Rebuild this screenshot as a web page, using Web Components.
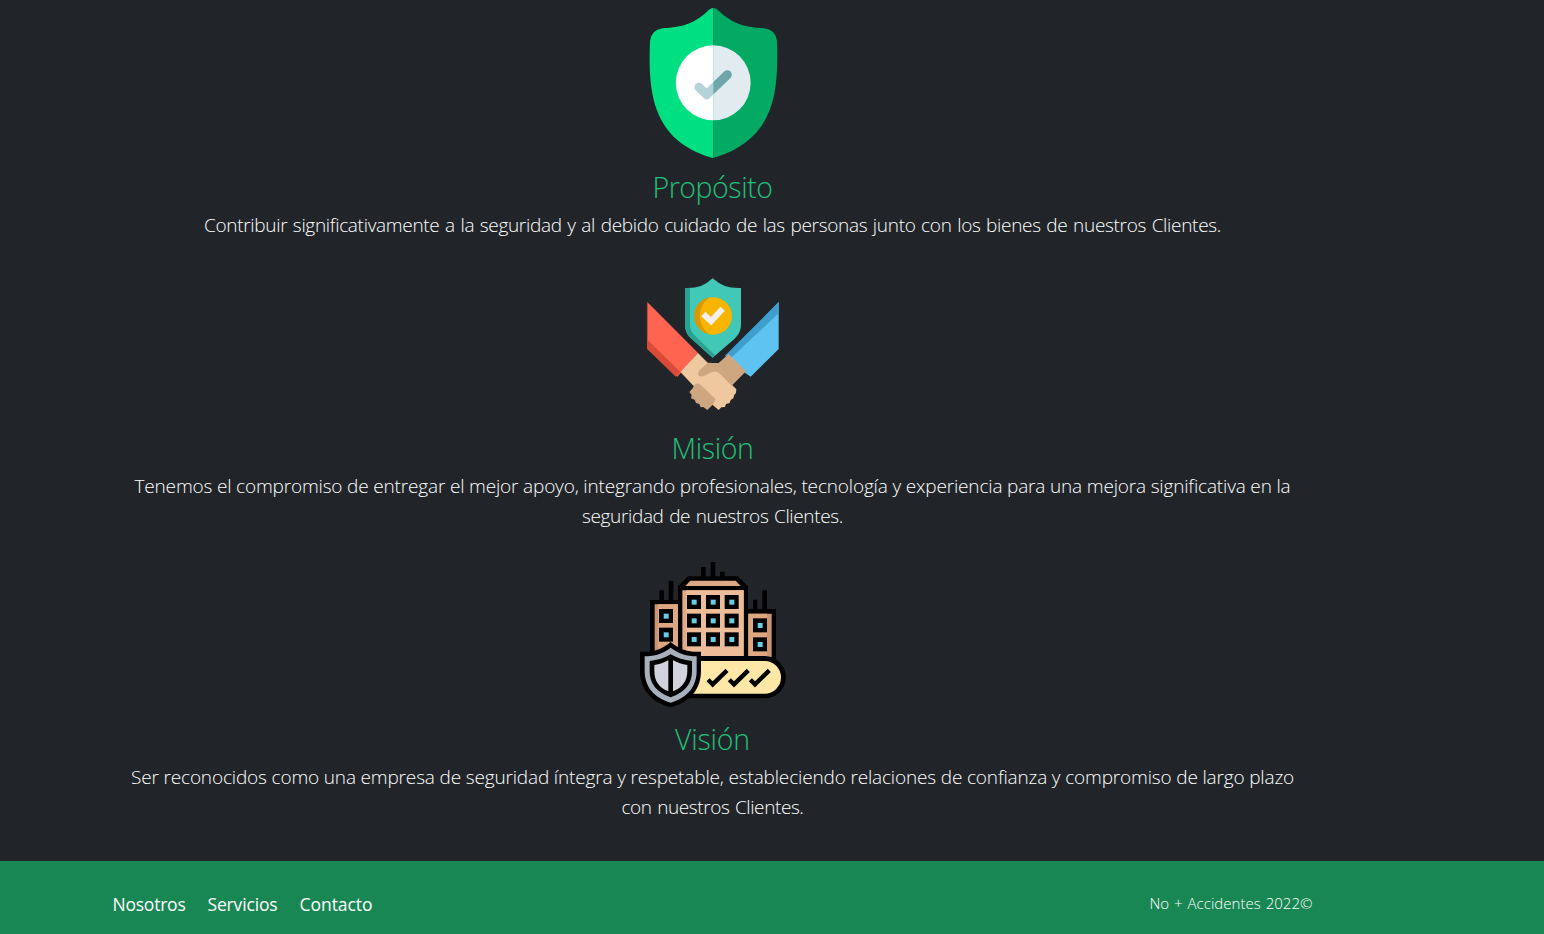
<!DOCTYPE html>
<html lang="es">
<head>
<meta charset="utf-8">
<title>No + Accidentes</title>
<style>
html,body{margin:0;height:100%;overflow:hidden;background:#212529}
body{font-family:"Open Sans","Noto Sans",sans-serif;color:#fff}
</style>
</head>
<body>
<about-page></about-page>
<script>
const icons = {
shield: `<svg viewBox="15 24 450 450">
<defs><clipPath id="l"><path d="M0 0H241V500H0Z"/></clipPath><clipPath id="r"><path d="M241 0H500V500H241Z"/></clipPath></defs>
<path fill="#00df81" d="M241 24Q234 24 228 29C190 67 152 82 88 85Q55 90 51 123C45 280 58 420 236 473L241 474Z"/>
<path fill="#02aa64" d="M241 24Q248 24 254 29C292 67 330 82 393 85Q428 89 432 123C437 280 425 415 248 472L241 474Z"/>
<circle cx="241" cy="248.500" r="112.500" fill="#fff" clip-path="url(#l)"/><path fill="#e1ebf0" d="M240.500 136a112.500 112.500 0 0 1 0 225Z"/>
<g fill="none" stroke-width="27" stroke-linecap="round" stroke-linejoin="round"><path clip-path="url(#l)" stroke="#b4d2d7" d="M198 262L221 284L283 224"/><path clip-path="url(#r)" stroke="#6fa6aa" d="M198 262L221 284L283 224"/></g></svg>`,
hands: `<svg viewBox="15 -3 450 450">
<path fill="#42c8b7" d="M156 54C194 55 211 49 239 25C268 49 286 55 324 54V160C324 184 317 194 304 207L239 263L177 208C163 195 156 183 156 162Z"/>
<path fill="#28a392" d="M156 54H171V160C171 182 178 190 190 201L246 255L239 263L177 208C163 195 156 183 156 162Z"/>
<circle cx="241" cy="138" r="56" fill="#f7b500"/><path fill="#de9700" d="M232 82A56 56 0 0 0 232 193C190 173 191 104 232 82Z"/>
<path fill="none" stroke="#f4efed" stroke-width="18" d="M211 132L234 154L269 116"/>
<path fill="#ff6450" d="M43 96L195 249L133 320L43 237Z"/><path fill="#d94b38" d="M43 209L142 306L128 320L43 237Z"/>
<path fill="#5fc3f1" d="M437 96V237L353 320L275 267Z"/><path fill="#3e9fce" d="M437 96V130L294 264L275 258Z"/>
<path fill="#efc8a0" d="M195 249L224 278L255 280L298 346L310 358L309 369L304 374L301 385L293 390L290 399L279 402L276 411L265 412L257 420L239 405L182 348L142 306Z"/>
<path fill="#cea780" d="M224 279H257L287 252L339 304L296 347L261 311Q246 299 229 309Q211 323 198 318Q192 311 198 302Z"/>
<path fill="#cea780" d="M186 342Q194 338 203 344L248 388L239 404L223 420L211 411L203 412L199 402L189 399L185 389L174 385L176 375L169 366L179 355Z"/></svg>`,
building: `<svg viewBox="15 15 450 450">
<path d="M204 36h14v34h-14zM233 21h14v49h-14zM261 50h14v20h-14zM79 106h14v35h-14zM107 78h14v63h-14zM360 134h13v34h-13zM388 106h14v62h-14zM51 135h90v170H51zM340 162h89v150h-89z"/>
<path fill="#ca9570" d="M65 148h70v145H65zM346 176h70v130h-70z"/><path fill="#dfa780" d="M75 148h60v145H75zM346 176h56v130h-56z"/>
<path d="M135 94L165 64H315L345 94V315H135Z"/><path fill="#dca987" d="M172 77H308L323 93H157Z"/><path fill="#dfaa85" d="M148 106H332V304H148Z"/><path fill="#edbd99" d="M160 106H332V304H160Z"/>
${[[162,120],[219,120],[275,120],[162,176],[219,176],[275,176],[162,232],[219,232],[275,232],[78,162],[78,218],[360,190],[360,247]].map(([x,y])=>`<path d="M${x} ${y}h42v42h-42z"/><path fill="#68cce5" d="M${x+14} ${y+14}h15v15h-15z"/>`).join('')}
<path d="M165 303H395A63 63 0 0 1 395 430H165Z"/><path fill="#ffe8a7" d="M175 318H395A49 49 0 0 1 395 416H175Z"/>
<path fill="none" stroke="#000" stroke-width="13" d="M225 374L239 388L282 346M289 374L303 388L346 346M352 374L366 388L409 346"/>
<path d="M21 290C55 293 88 284 113 261C138 284 171 293 204 290V347C204 401 173 441 113 457C53 441 21 401 21 347Z"/>
<path fill="#a7b0bb" d="M35 304C65 304 91 295 113 278C136 295 161 304 191 304V347C191 394 164 428 113 443C62 428 35 394 35 347Z"/>
<path d="M50 318C74 316 95 309 113 298C132 309 153 316 177 318V349C177 386 157 412 113 427C70 412 50 386 50 349Z"/>
<path fill="#d0d3dd" d="M64 330C80 328 94 323 106 316V409C77 397 64 377 64 347ZM120 316C133 323 147 328 163 330V347C163 377 149 397 120 409Z"/></svg>`
};

class BrandIcon extends HTMLElement {
  connectedCallback() {
    this.attachShadow({mode:'open'}).innerHTML = `<style>:host{display:block;width:150px;height:150px}svg{display:block;width:100%;height:100%}</style>${icons[this.getAttribute('name')]}`;
  }
}
customElements.define('brand-icon', BrandIcon);

/* A single line of text whose tracking is adjusted to a given measure. */
class FitText extends HTMLElement {
  connectedCallback() {
    const root = this.attachShadow({mode:'open'});
    root.innerHTML = `<style>:host{display:block;width:max-content;white-space:nowrap}span{display:inline-block}</style><span><slot></slot></span>`;
    const span = root.querySelector('span');
    const gap = (Number(this.getAttribute('measure')) - span.getBoundingClientRect().width) / this.textContent.length;
    span.style.letterSpacing = gap + 'px';
  }
}

class ValueSection extends HTMLElement {
  connectedCallback() {
    this.attachShadow({mode:'open'}).innerHTML = `<style>
:host{display:flex;flex-direction:column;align-items:center}
h3{margin:11px 0 5px;font-weight:320;font-size:28.500px;line-height:36px;color:#20c07a}
.copy{display:flex;flex-direction:column;align-items:center;font-weight:345;font-size:19px;line-height:30px}
.copy ::slotted(.open){word-spacing:1px}
</style><brand-icon name="${this.getAttribute('icon')}"></brand-icon>
<h3><fit-text measure="${this.getAttribute('measure')}">${this.getAttribute('heading')}</fit-text></h3>
<div class="copy"><slot></slot></div>`;
  }
}

class PageFooter extends HTMLElement {
  connectedCallback() {
    this.attachShadow({mode:'open'}).innerHTML = `<style>
:host{display:block;background:#198754;box-sizing:border-box;padding-top:30px}
.row{display:flex;justify-content:space-between;align-items:flex-start;width:1200px;margin-left:112.500px}
nav{display:flex;gap:22px}
a{color:#fff;text-decoration:none;font-size:17.500px;line-height:27px}
.copyright{font-weight:320;font-size:15px;line-height:25px;word-spacing:1px}
</style><div class="row"><nav><a href="#"><fit-text measure="73">Nosotros</fit-text></a><a href="#"><fit-text measure="70">Servicios</fit-text></a><a href="#"><fit-text measure="73">Contacto</fit-text></a></nav>
<div class="copyright"><fit-text measure="163">No + Accidentes 2022©</fit-text></div></div>`;
  }
}

class AboutPage extends HTMLElement {
  connectedCallback() {
    this.attachShadow({mode:'open'}).innerHTML = `<style>
:host{display:flex;flex-direction:column;height:934px}
main{box-sizing:border-box;height:861px;width:1200px;margin-left:112.500px;padding-top:8px;display:flex;flex-direction:column;gap:29px}
page-footer{flex:1}
</style><main>
<value-section icon="shield" heading="Propósito" measure="120"><fit-text class="open" measure="1017">Contribuir significativamente a la seguridad y al debido cuidado de las personas junto con los bienes de nuestros Clientes.</fit-text></value-section>
<value-section icon="hands" heading="Misión" measure="82"><fit-text measure="1156">Tenemos el compromiso de entregar el mejor apoyo, integrando profesionales, tecnología y experiencia para una mejora significativa en la</fit-text><fit-text class="open" measure="261">seguridad de nuestros Clientes.</fit-text></value-section>
<value-section icon="building" heading="Visión" measure="75"><fit-text measure="1163">Ser reconocidos como una empresa de seguridad íntegra y respetable, estableciendo relaciones de confianza y compromiso de largo plazo</fit-text><fit-text class="open" measure="182">con nuestros Clientes.</fit-text></value-section>
</main><page-footer></page-footer>`;
  }
}
customElements.define('fit-text', FitText);
customElements.define('value-section', ValueSection);
customElements.define('page-footer', PageFooter);
customElements.define('about-page', AboutPage);
</script>
</body>
</html>
